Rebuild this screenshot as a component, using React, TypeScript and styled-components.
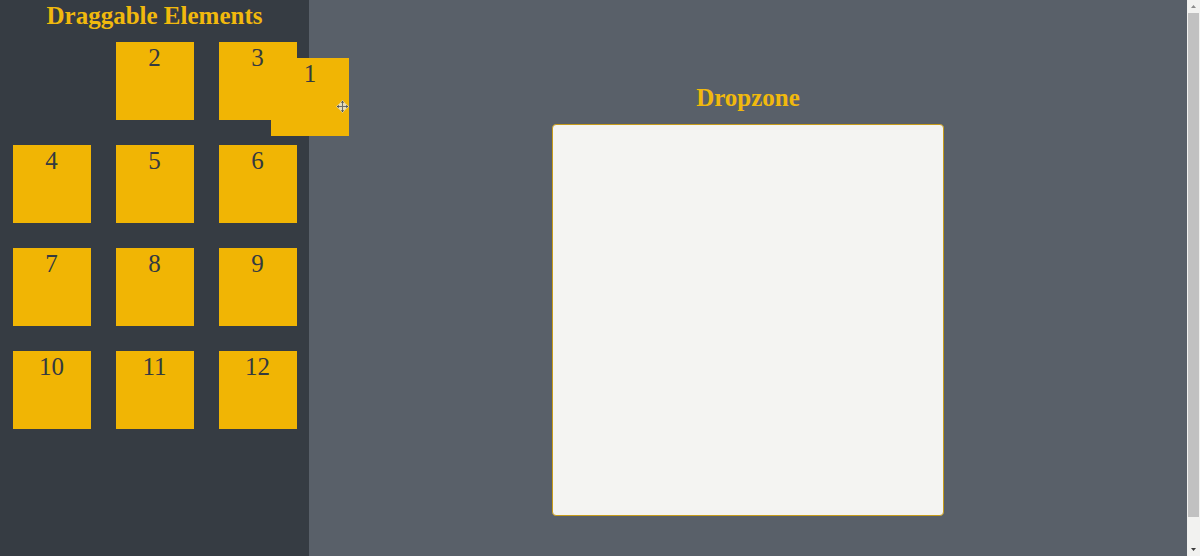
import React from 'react';
import styled, { createGlobalStyle } from 'styled-components';

const GlobalStyle = createGlobalStyle`
  *, *::before, *::after { box-sizing: border-box; }
  body {
    margin: 0;
    font-family: "Liberation Serif", "Times New Roman", serif;
    font-size: 25px;
    line-height: 32px;
    color: #343a40;
  }
`;

const Page = styled.div`
  position: relative;
  display: flex;
  min-height: 100vh;
  background: #596069;
`;

const Sidebar = styled.aside`
  flex: 0 0 309px;
  background: #363c43;
`;

const Title = styled.h1`
  margin: 0;
  font-size: 25px;
  line-height: 32px;
  font-weight: bold;
  text-align: center;
  color: #f1b90d;
`;

const TileGrid = styled.div`
  display: grid;
  grid-template-columns: repeat(3, 78px);
  justify-content: space-around;
  row-gap: 25px;
  padding: 10px 0;
`;

const Tile = styled.div<{ $dragging?: boolean }>`
  width: 78px;
  height: 78px;
  text-align: center;
  background: #f1b504;
  cursor: move;
  ${({ $dragging }) =>
    $dragging &&
    `
    position: absolute;
    left: 271px;
    top: 58px;
    z-index: 1;
  `}
`;

const Slot = styled.div`
  height: 78px;
`;

const MoveCursor = styled.svg`
  position: absolute;
  right: 0;
  top: 42px;
  width: 13px;
  height: 13px;
`;

const Main = styled.main`
  flex: 1;
  display: flex;
  flex-direction: column;
  align-items: center;
  padding: 82px 20px 40px;
`;

const Dropzone = styled.section`
  width: 100%;
  max-width: 392px;
  height: 392px;
  margin-top: 10px;
  background: #f4f4f2;
  border: 1px solid #c79c1c;
  border-radius: 4px;
`;

const Scrollbar = styled.div`
  flex: 0 0 13px;
  height: 100vh;
  display: flex;
  flex-direction: column;
  background: #f2f2f0;
`;

const Arrow = styled.svg`
  flex: 0 0 13px;
  width: 13px;
  height: 13px;
`;

const Track = styled.div`
  flex: 1;
  padding: 0 1px;
`;

const Thumb = styled.div`
  height: 95%;
  background: #c1c1c1;
`;

const numbers = Array.from({ length: 12 }, (_, i) => i + 1);
const dragged = 1;

export default function App() {
  return (
    <>
      <GlobalStyle />
      <Page>
        <Sidebar>
          <Title>Draggable Elements</Title>
          <TileGrid>
            {numbers.map((n) =>
              n === dragged ? (
                <Slot key={n} />
              ) : (
                <Tile key={n} draggable>
                  {n}
                </Tile>
              ),
            )}
          </TileGrid>
        </Sidebar>
        <Main>
          <Title as="h2">Dropzone</Title>
          <Dropzone aria-label="Dropzone" />
        </Main>
        <Scrollbar aria-hidden="true">
          <Arrow viewBox="0 0 13 13">
            <path d="M4 8 L6.5 5 L9 8 Z" fill="#8b8b8b" />
          </Arrow>
          <Track>
            <Thumb />
          </Track>
          <Arrow viewBox="0 0 13 13">
            <path d="M4 5 H9 L6.5 8 Z" fill="#3c3c3c" />
          </Arrow>
        </Scrollbar>
        <Tile $dragging draggable>
          {dragged}
          <MoveCursor viewBox="0 0 13 13" aria-hidden="true">
            <path
              d="M6.5 0 L9.5 3.5 L13 6.5 L9.5 9.5 L6.5 13 L3.5 9.5 L0 6.5 L3.5 3.5 Z"
              fill="#e6dcb8"
            />
            <path d="M6.5 3 V10 M3 6.5 H10" stroke="#6e6e6a" strokeWidth="1" />
            <path
              d="M6.5 .8 L8 2.8 H5 Z M6.5 12.2 L5 10.2 H8 Z M.8 6.5 L2.8 5 V8 Z M12.2 6.5 L10.2 8 V5 Z"
              fill="#343a40"
            />
          </MoveCursor>
        </Tile>
      </Page>
    </>
  );
}
